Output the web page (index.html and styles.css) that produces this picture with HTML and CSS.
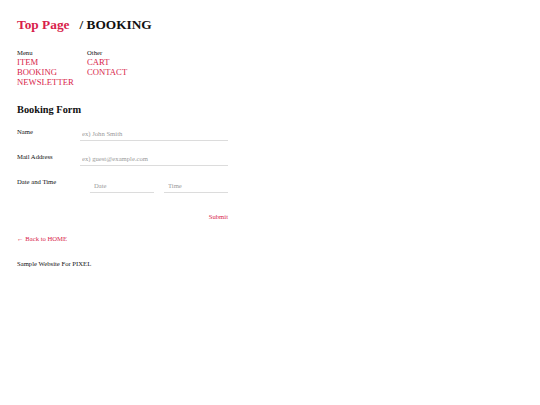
FILE: index.html
```html
<!DOCTYPE html>
<html lang="en">
<head>
<meta charset="utf-8">
<title>BOOKING | Sample Website For PIXEL</title>
<link rel="stylesheet" href="styles.css">
</head>
<body>
<div class="page">
  <header class="header">
    <h1 class="title"><a class="title-home" href="#">Top Page</a><span class="title-current">/ BOOKING</span></h1>
    <nav class="nav">
      <div class="nav-col">
        <p class="nav-label">Menu</p>
        <ul class="nav-list">
          <li><a href="#">ITEM</a></li>
          <li><a href="#">BOOKING</a></li>
          <li><a href="#">NEWSLETTER</a></li>
        </ul>
      </div>
      <div class="nav-col">
        <p class="nav-label">Other</p>
        <ul class="nav-list">
          <li><a href="#">CART</a></li>
          <li><a href="#">CONTACT</a></li>
        </ul>
      </div>
    </nav>
  </header>
  <main class="main">
    <section class="booking">
      <h2 class="booking-title">Booking Form</h2>
      <form class="form">
        <div class="row">
          <label class="row-label" for="name">Name</label>
          <input class="field" id="name" type="text" placeholder="ex) John Smith">
        </div>
        <div class="row">
          <label class="row-label" for="mail">Mail Address</label>
          <input class="field" id="mail" type="text" placeholder="ex) guest@example.com">
        </div>
        <div class="row">
          <label class="row-label" for="date">Date and Time</label>
          <div class="datetime">
            <input class="field field-dt" id="date" type="text" placeholder="Date">
            <input class="field field-dt" id="time" type="text" placeholder="Time">
          </div>
        </div>
        <div class="actions">
          <button class="submit" type="button">Submit</button>
        </div>
      </form>
    </section>
    <a class="back" href="#">← Back to HOME</a>
  </main>
  <footer class="footer">Sample Website For PIXEL</footer>
</div>
</body>
</html>
```

FILE: styles.css
```css
* { box-sizing: border-box; }

html, body {
  margin: 0;
  padding: 0;
  background: #ffffff;
}

body {
  font-family: "Liberation Serif", "Times New Roman", serif;
  color: #111111;
}

a {
  color: #d81e4b;
  text-decoration: none;
}

.page {
  padding: 16.5px 17px 20px;
  display: flex;
  flex-direction: column;
}

.title {
  margin: 0;
  font-size: 13.33px;
  line-height: 16px;
  font-weight: bold;
  display: flex;
}

.title-home {
  color: #d81e4b;
  font-weight: bold;
}

.title-current {
  margin-left: 10px;
  color: #111111;
}

.nav {
  margin-top: 16px;
  display: flex;
}

.nav-col {
  width: 70px;
}

.nav-label {
  margin: 0;
  font-size: 6.67px;
  line-height: 8px;
  color: #111111;
}

.nav-list {
  margin: 0;
  padding: 0;
  list-style: none;
  font-size: 8.67px;
  line-height: 10px;
}

.main {
  display: flex;
  flex-direction: column;
}

.booking {
  margin-top: 17.3px;
  width: 211px;
}

.booking-title {
  margin: 0;
  font-size: 10.33px;
  line-height: 12px;
  font-weight: bold;
}

.form {
  margin-top: 12.2px;
  display: flex;
  flex-direction: column;
  gap: 12px;
}

.row {
  display: flex;
  align-items: flex-start;
}

.row-label {
  width: 63px;
  flex: none;
  font-size: 6.67px;
  line-height: 8px;
  color: #111111;
}

.field {
  flex: 1 1 0;
  width: 0;
  min-width: 0;
  height: 13px;
  margin: 0;
  padding: 2px 2px 2px 2px;
  border: none;
  border-bottom: 1px solid #dcdcdc;
  border-radius: 0;
  background: transparent;
  font-family: "Liberation Serif", "Times New Roman", serif;
  font-size: 6.67px;
  line-height: 8px;
  color: #111111;
  outline: none;
  appearance: none;
}

.field::placeholder {
  color: #9a9a9a;
}

.datetime {
  flex: 1 1 0;
  min-width: 0;
  display: flex;
  gap: 10px;
  padding-left: 10px;
  margin-top: 2px;
}

.field-dt {
  padding-left: 4px;
}

.actions {
  margin-top: 8.5px;
  display: flex;
  justify-content: flex-end;
}

.submit {
  margin: 0;
  padding: 0;
  border: none;
  background: none;
  font-family: "Liberation Serif", "Times New Roman", serif;
  font-size: 6.67px;
  line-height: 8px;
  color: #d81e4b;
  cursor: pointer;
}

.back {
  margin-top: 14px;
  align-self: flex-start;
  font-size: 6.67px;
  line-height: 8px;
}

.footer {
  margin-top: 17px;
  font-size: 6.67px;
  line-height: 8px;
  color: #111111;
}
```
